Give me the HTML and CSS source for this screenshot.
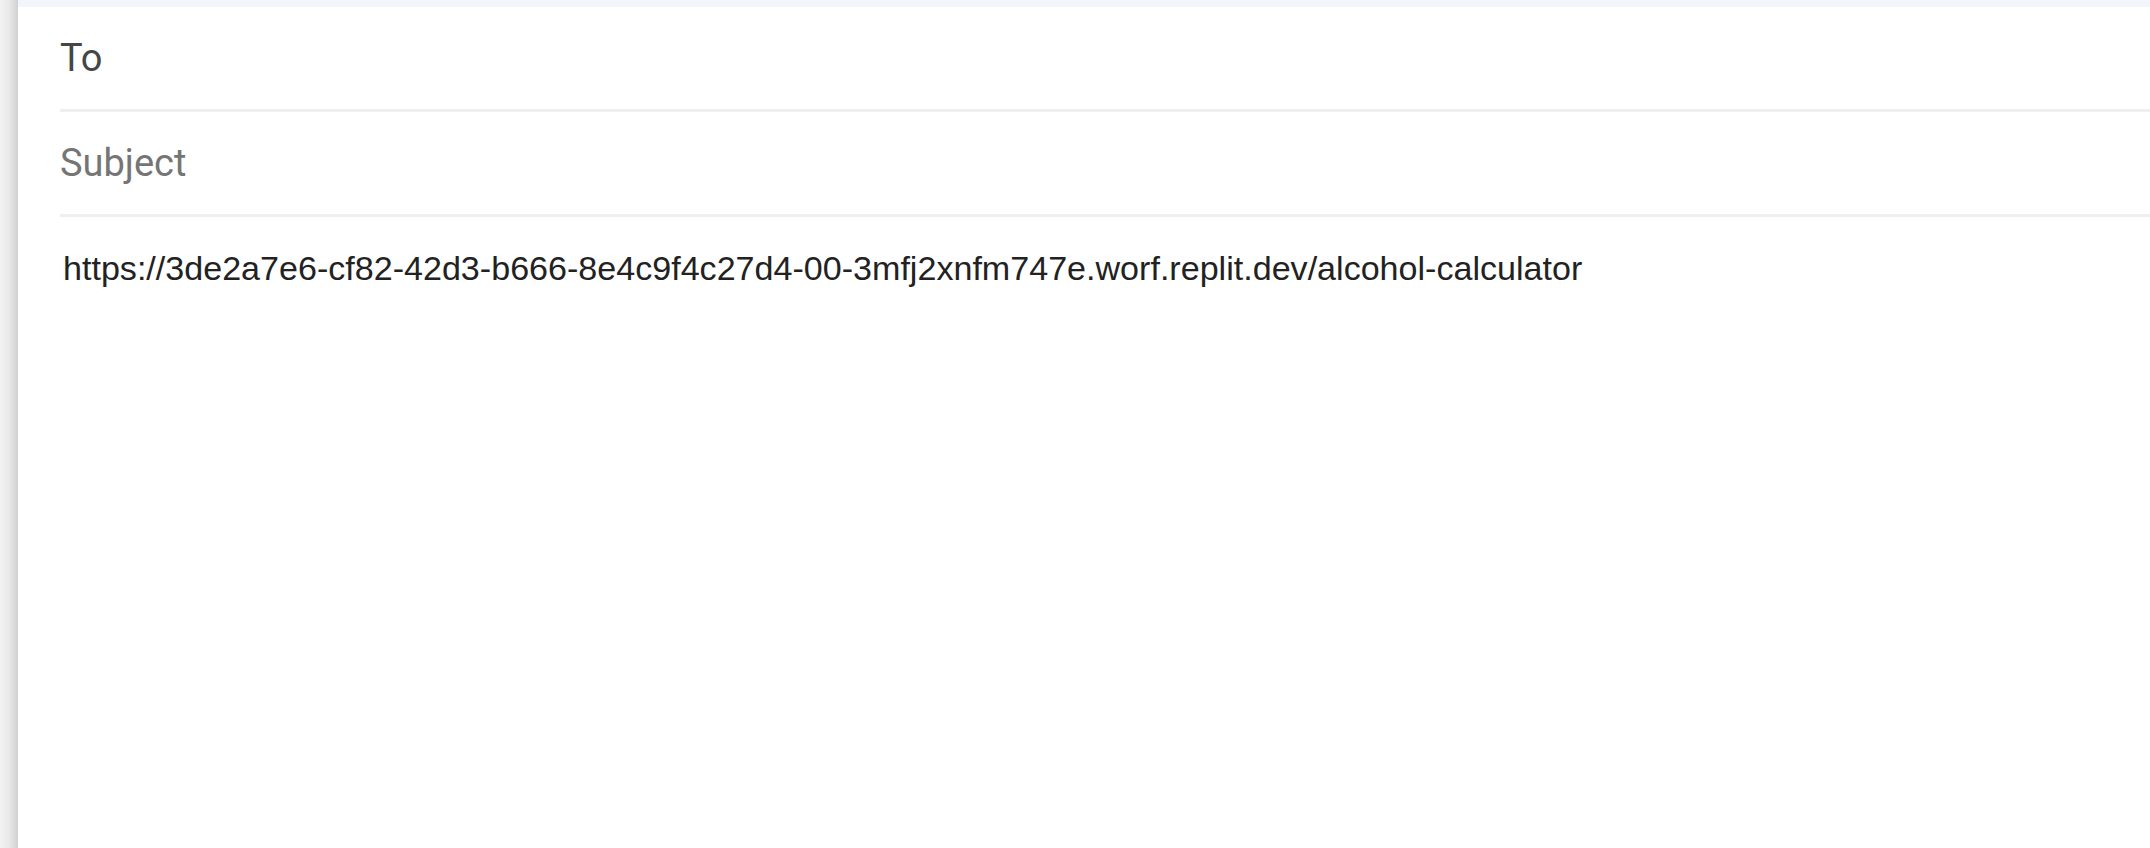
FILE: index.html
```html
<!DOCTYPE html>
<html lang="en">
<head>
<meta charset="utf-8">
<title>Compose</title>
<link rel="stylesheet" href="styles.css">
</head>
<body>
<div class="page">
  <div class="edge"></div>
  <div class="main">
    <div class="topstrip"></div>
    <div class="compose">
      <div class="row to">To</div>
      <div class="row subject">Subject</div>
      <div class="body-text">https://3de2a7e6-cf82-42d3-b666-8e4c9f4c27d4-00-3mfj2xnfm747e.worf.replit.dev/alcohol-calculator</div>
    </div>
  </div>
</div>
</body>
</html>
```
FILE: styles.css
```css
html, body {
  margin: 0;
  padding: 0;
  height: 100%;
  background: #ffffff;
}
.page {
  display: flex;
  height: 100%;
  overflow: hidden;
}
.edge {
  width: 18px;
  flex: none;
  background: linear-gradient(to right, #f2f2f2 0%, #e9e9e9 50%, #d6d6d6 90%, #cfcfcf 100%);
}
.main {
  flex: 1;
  display: flex;
  flex-direction: column;
}
.topstrip {
  height: 7px;
  background: #f2f6fc;
}
.compose {
  padding-left: 42px;
}
.row {
  height: 102px;
  line-height: 102px;
  border-bottom: 3px solid #efefef;
  font-family: Roboto, "Noto Sans", sans-serif;
  font-size: 38px;
  box-sizing: content-box;
}
.to {
  color: #444746;
}
.subject {
  color: #757575;
}
.body-text {
  padding: 32px 0 0 3px;
  font-family: "Liberation Sans", Arial, sans-serif;
  font-size: 34.1px;
  color: #222222;
  white-space: nowrap;
}
```
